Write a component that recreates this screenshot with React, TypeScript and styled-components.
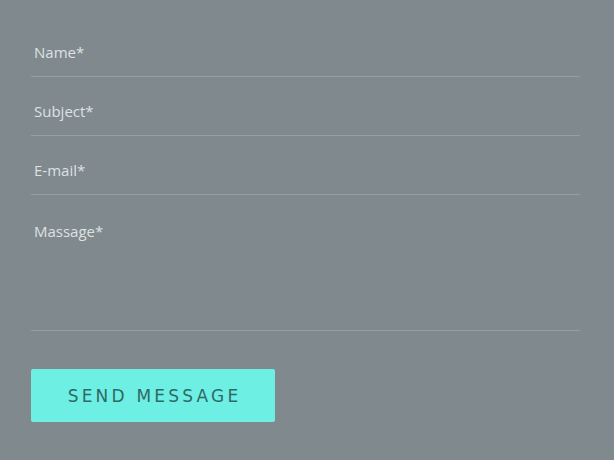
import React from "react";
import styled, { createGlobalStyle } from "styled-components";

const Global = createGlobalStyle`
  html, body { margin: 0; padding: 0; background: #7f898e; }
  body { font-family: "Open Sans", "Lato", sans-serif; }
  * { box-sizing: border-box; }
`;

const Page = styled.div`
  width: 614px;
  height: 460px;
  padding: 28px 34px 0 31px;
  background: #7f898e;
`;

const Form = styled.form`
  display: flex;
  flex-direction: column;
  gap: 10px;
`;

const Input = styled.input`
  display: block;
  width: 100%;
  height: 49px;
  padding: 0 3px;
  border: none;
  border-bottom: 1px solid #959ea2;
  background: transparent;
  font-family: "Open Sans", "Lato", sans-serif;
  font-weight: 400;
  font-size: 15px;
  color: #e3e5e6;
  outline: none;
  &::placeholder { color: #dfe1e2; opacity: 1; }
`;

const TextArea = styled.textarea`
  display: block;
  width: 100%;
  height: 126px;
  padding: 16px 3px 0;
  border: none;
  border-bottom: 1px solid #959ea2;
  background: transparent;
  font-family: "Open Sans", "Lato", sans-serif;
  font-weight: 400;
  font-size: 15px;
  line-height: 20px;
  color: #e3e5e6;
  outline: none;
  resize: none;
  &::placeholder { color: #dfe1e2; opacity: 1; }
`;

const Button = styled.button`
  margin-top: 28px;
  align-self: flex-start;
  width: 244px;
  height: 53px;
  border: none;
  border-radius: 2px;
  background: #6eefe3;
  color: #2e6a65;
  font-family: "DejaVu Sans", "Liberation Sans", sans-serif;
  font-size: 17px;
  letter-spacing: 3.2px;
  padding: 0 0 0 3px;
  cursor: pointer;
`;

export default function App() {
  return (
    <>
      <Global />
      <Page>
        <Form onSubmit={(e) => e.preventDefault()}>
          <Input placeholder="Name*" />
          <Input placeholder="Subject*" />
          <Input placeholder="E-mail*" />
          <TextArea placeholder="Massage*" />
          <Button type="submit">SEND MESSAGE</Button>
        </Form>
      </Page>
    </>
  );
}
